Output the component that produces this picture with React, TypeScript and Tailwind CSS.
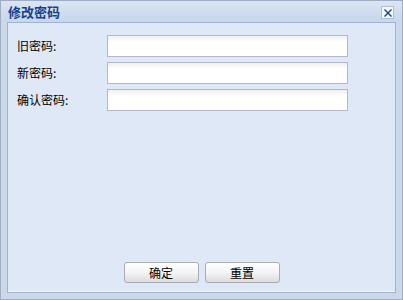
// 修改密码 dialog, ExtJS-style window
const font = { fontFamily: '"Noto Sans CJK SC", "Noto Sans", sans-serif' };

const fields = ['旧密码:', '新密码:', '确认密码:'];

function CloseIcon() {
  return (
    <svg width="8" height="8" viewBox="0 0 8 8" fill="none">
      <path d="M1 1 L7 7 M7 1 L1 7" stroke="#15428b" strokeWidth="1.4" strokeLinecap="square" />
    </svg>
  );
}

function Button({ label }: { label: string }) {
  return (
    <button className="w-[75px] h-[21px] rounded-[3px] border border-[#a8acb3] bg-gradient-to-b from-[#ffffff] via-[#f4f4f4] to-[#dcdcdc] text-[12px] leading-none text-black flex items-center justify-center">
      {label}
    </button>
  );
}

export default function App() {
  return (
    <div
      className="w-[403px] h-[300px] border border-[#9fadc2] bg-[#cbd8e9] flex flex-col"
      style={font}
    >
      {/* Header */}
      <div className="h-[21px] shrink-0 flex items-center justify-between pl-[7px] pr-[8px] bg-gradient-to-b from-[#dbe5f3] to-[#c7d6ec]">
        <span className="text-[13px] font-bold text-[#15428b] leading-none">修改密码</span>
        <span className="w-[13px] h-[13px] mt-[2px] border border-[#a9bfdd] bg-[#f3f7fc] flex items-center justify-center">
          <CloseIcon />
        </span>
      </div>

      {/* Body */}
      <div className="flex-1 mx-[6px] mb-[6px] border border-[#9fb3cf] bg-[#dfe8f6] flex flex-col shadow-[inset_0_-1px_0_#f3f7fc]">
        <div className="flex-1 flex flex-col gap-[5px] pt-[12px] pl-[9px]">
          {fields.map((f) => (
            <div key={f} className="flex items-center h-[22px]">
              <span className="w-[90px] text-[12px] text-black leading-none">{f}</span>
              <input
                type="text"
                className="w-[241px] h-[22px] border border-[#b5b8c8] bg-gradient-to-b from-[#efefef] to-[#ffffff] to-[30%] outline-none"
              />
            </div>
          ))}
        </div>
        <div className="flex justify-center gap-[6px] pb-[9px]">
          <Button label="确定" />
          <Button label="重置" />
        </div>
      </div>
    </div>
  );
}
